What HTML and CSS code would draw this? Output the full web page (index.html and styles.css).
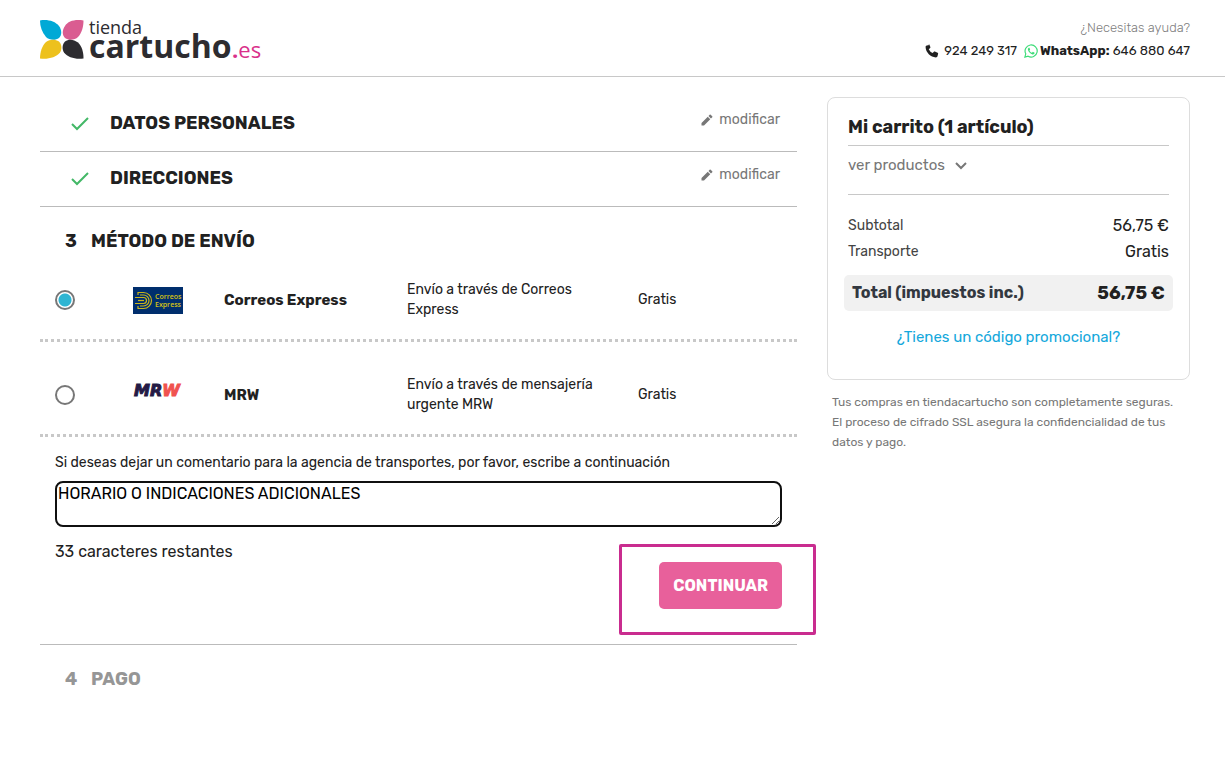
FILE: index.html
```html
<!DOCTYPE html>
<html lang="es">
<head>
<meta charset="utf-8">
<meta name="viewport" content="width=device-width, initial-scale=1">
<title>Tiendacartucho.es - Método de envío</title>
<link rel="stylesheet" href="styles.css">
</head>
<body>
<header class="site-header">
  <a class="logo" href="#" aria-label="tiendacartucho.es">
    <svg width="224" height="44" viewBox="0 0 224 44">
      <path fill="#00a9d6" d="M0 3.500C7 2 15 4 19 9c3 4 3 9 0 12-4 3-10 2-13-1C2 15.500 0 9.500 0 3.500z"/>
      <path fill="#da5c91" d="M43.500 3.500C35 2 28 4 25 9c-3 4-3 9 0 12 4 3 10 2 13-1 4-4 5.500-10.500 5.500-16.500z"/>
      <path fill="#edc11d" d="M0 41.500C0 35 2 29 6 25c4-3 9-3 13-.5 3 3 3 8 1 11-4 5-12 7-20 6z"/>
      <path fill="#2d2c30" d="M43.500 41.500c0-6.500-1.500-12-5.500-16-4-3-9-4-13-1-3 3-3 8-1 11 4 5 11 7 19.500 6z"/>
      <text class="logo-top" x="49" y="17">tienda</text>
      <text class="logo-main" x="49" y="41">cartucho</text>
      <text class="logo-es" x="192" y="41"><tspan class="logo-dot">.</tspan>es</text>
    </svg>
  </a>
  <div class="help">
    <a class="help-link" href="#">¿Necesitas ayuda?</a>
    <p class="contact">
      <svg class="phone" width="14" height="14" viewBox="0 0 24 24"><path fill="#212121" d="M7.500 1.500 3 2.600C1.800 3 1 4 1 5.200 1.300 14.500 9.500 22.700 18.800 23c1.200 0 2.200-.8 2.600-2l1.100-4.500c.1-.7-.2-1.400-.9-1.700l-4.700-2c-.6-.3-1.300-.1-1.700.4l-2 2.400a15 15 0 0 1-6.800-6.800l2.400-2c.5-.4.7-1.100.4-1.700l-2-4.700c-.3-.7-1-1-1.700-.9z"/></svg>
      <span>924 249 317</span>
      <svg class="whatsapp" width="14" height="14" viewBox="0 0 24 24" fill="none" stroke="#3ddc78" stroke-width="2"><path d="M1.500 22.500l1.500-5.700A10.400 10.400 0 1 1 7 21z"/><path fill="#3ddc78" stroke="none" d="M8.300 6.300c-1.500.8-2 2.600-1.300 4.500 1.300 3.500 4 6 7.500 7 1.900.4 3.600-.7 3.700-2.700l-3-1.700-1.500 1.700c-2-.7-3.500-2.200-4.400-4L10.500 9.700 9.400 6.500z"/></svg>
      <span><strong>WhatsApp:</strong> 646 880 647</span>
    </p>
  </div>
</header>

<main class="checkout">
  <div class="steps">
    <section class="step-done">
      <svg class="check" width="20" height="16" viewBox="0 0 20 16"><path d="M2 9l5 5L18 3"/></svg>
      <h2>DATOS PERSONALES</h2>
      <a class="edit" href="#"><svg width="12" height="12" viewBox="0 0 24 24"><path d="M1 18v5h5L18.500 10.500l-5-5zM22.500 6.600c.5-.5.5-1.300 0-1.900L19.300 1.500c-.5-.5-1.300-.5-1.900 0l-2.500 2.600 5 5z"/></svg>modificar</a>
    </section>
    <section class="step-done">
      <svg class="check" width="20" height="16" viewBox="0 0 20 16"><path d="M2 9l5 5L18 3"/></svg>
      <h2>DIRECCIONES</h2>
      <a class="edit" href="#"><svg width="12" height="12" viewBox="0 0 24 24"><path d="M1 18v5h5L18.500 10.500l-5-5zM22.500 6.600c.5-.5.5-1.300 0-1.900L19.300 1.500c-.5-.5-1.300-.5-1.900 0l-2.500 2.600 5 5z"/></svg>modificar</a>
    </section>

    <section class="shipping">
      <h2 class="step-title"><span class="num">3</span>MÉTODO DE ENVÍO</h2>
      <div class="options">
        <label class="option">
          <input type="radio" name="envio" checked>
          <svg width="50" height="27" viewBox="0 0 50 27">
            <path fill="#002e6d" d="M0 0h50v27H0z"/>
            <g fill="none" stroke="#c9b51b" stroke-width="1.200">
              <path d="M5 8V5.500h5.500a8 8 0 0 1 0 16H5V19"/>
              <path d="M7 8h3.500a5.500 5.500 0 0 1 0 11H7"/>
              <path d="M2 10.500h8.500a3 3 0 0 1 0 6H2"/>
              <path d="M5 13.500h6"/>
            </g>
            <text class="correos-text" x="22" y="12">Correos</text>
            <text class="correos-text" x="22" y="20">Express</text>
          </svg>
          <strong>Correos Express</strong>
          <span class="desc">Envío a través de Correos Express</span>
          <span>Gratis</span>
        </label>
        <label class="option">
          <input type="radio" name="envio">
          <svg width="50" height="27" viewBox="0 0 50 27">
            <text class="mrw-text" x="1" y="14">MR<tspan class="mrw-w">W</tspan></text>
          </svg>
          <strong>MRW</strong>
          <span class="desc">Envío a través de mensajería urgente MRW</span>
          <span>Gratis</span>
        </label>
      </div>
      <div class="comment">
        <label for="comentario">Si deseas dejar un comentario para la agencia de transportes, por favor, escribe a continuación</label>
        <textarea id="comentario">HORARIO O INDICACIONES ADICIONALES</textarea>
        <p>33 caracteres restantes</p>
        <div class="actions">
          <button class="continue" type="button">CONTINUAR</button>
        </div>
      </div>
    </section>

    <section class="pending">
      <h2 class="step-title"><span class="num">4</span>PAGO</h2>
    </section>
  </div>

  <aside>
    <div class="cart">
      <h2>Mi carrito (1 artículo)</h2>
      <div class="products">
        <a href="#">ver productos <svg width="12" height="8" viewBox="0 0 12 8"><path d="M1 1l5 5 5-5"/></svg></a>
      </div>
      <dl class="lines">
        <div><dt>Subtotal</dt><dd>56,75 €</dd></div>
        <div><dt>Transporte</dt><dd>Gratis</dd></div>
      </dl>
      <div class="total"><span>Total (impuestos inc.)</span><strong>56,75 €</strong></div>
      <a class="promo" href="#">¿Tienes un código promocional?</a>
    </div>
    <p class="secure">Tus compras en tiendacartucho son completamente seguras. El proceso de cifrado SSL asegura la confidencialidad de tus datos y pago.</p>
  </aside>
</main>
</body>
</html>
```
FILE: styles.css
```css
* { box-sizing: border-box; }

body {
  margin: 0;
  background: #fff;
  color: #212121;
  font: 14px/20px Rubik, Roboto, sans-serif;
}

h2, p, dl, dd { margin: 0; }
h2 { font-size: 18px; line-height: 20px; font-weight: 700; }
strong { font-weight: 700; }
a { color: #777; text-decoration: none; }

.site-header {
  display: flex;
  justify-content: space-between;
  align-items: flex-start;
  padding: 17px 35px 15px 40px;
  border-bottom: 1px solid #c8c8c8;
}
.logo svg { display: block; overflow: visible; }
.logo-top { font: 18px "Open Sans", sans-serif; fill: #2d2c30; }
.logo-main { font: 700 32px "Open Sans", sans-serif; fill: #2d2c30; }
.logo-es { font: 22px "Open Sans", sans-serif; fill: #d9308a; }
.logo-dot { font-weight: 700; }

.help { padding-top: 1px; text-align: right; font-size: 13px; }
.help-link { display: block; color: #808080; font-weight: 300; }
.contact { display: flex; align-items: center; margin-top: 3px; }
.phone { margin-right: 5px; }
.whatsapp { margin: 0 2px 0 7px; }

.checkout {
  display: grid;
  grid-template-columns: 757fr 363fr;
  gap: 30px;
  align-items: start;
  padding: 20px 35px 40px 40px;
}

.step-done {
  display: flex;
  align-items: center;
  padding: 16px 17px 18px 30px;
  border-bottom: 1px solid #bbb;
}
.check { margin-right: 20px; fill: none; stroke: #43b867; stroke-width: 2; }
.edit { display: flex; gap: 6px; align-items: center; margin: -6px 0 0 auto; }
.edit svg { fill: #777; }

.step-title { display: flex; padding: 24px 0 0 25px; }
.num { width: 26px; }

.shipping { padding-bottom: 35px; border-bottom: 1px solid #bbb; }
.options { display: grid; gap: 4px; }
.option {
  display: grid;
  grid-template-columns: 78fr 91fr 183fr 231fr 144fr;
  align-items: center;
  padding: 29px 15px 19px;
  border-bottom: 3px dotted #c8c8c8;
}
.option strong { font-size: 15px; }
.option input {
  appearance: none;
  width: 20px;
  height: 20px;
  margin: 0;
  border: 2px solid #777;
  border-radius: 50%;
}
.option input:checked { background: radial-gradient(circle, #2fb5d2 6px, #fff 7px); }
.desc { padding-right: 32px; }
.correos-text { font: 600 7px "Open Sans", sans-serif; fill: #d8c414; }
.mrw-text { font: italic 700 16px "DejaVu Sans", sans-serif; fill: #241a45; stroke: #241a45; }
.mrw-w { fill: #f0524f; stroke: #f0524f; }

.comment { padding: 16px 15px 0; }
.comment label { display: block; margin-bottom: 8px; }
.comment textarea {
  display: block;
  width: 100%;
  height: 46px;
  padding: 1px 1px 0;
  border: 2px solid #101010;
  border-radius: 8px;
  outline: 0;
  color: #000;
  font: 16px/20px Rubik, Roboto, sans-serif;
}
.comment p { margin-top: 15px; font-size: 16px; }

.actions { position: relative; width: max-content; margin-left: auto; }
.actions::after {
  content: "";
  position: absolute;
  inset: -18px -34px -26px -40px;
  border: 3px solid #c92c8f;
  border-radius: 2px;
  pointer-events: none;
}
.continue {
  display: block;
  padding: 14px 14px 13px;
  border: 0;
  border-radius: 5px;
  background: #e8609b;
  color: #fff;
  font: 700 16px/20px Rubik, Roboto, sans-serif;
}

.pending { color: #969696; }

.cart {
  padding: 19px 20px 32px;
  border: 1px solid #ddd;
  border-radius: 8px;
}
.cart h2 { padding-bottom: 8px; border-bottom: 1px solid #c8c8c8; }
.products { padding: 9px 0 19px; border-bottom: 1px solid #c8c8c8; font-size: 15px; }
.products svg { margin-left: 6px; fill: none; stroke: #777; stroke-width: 2; }
.lines { display: grid; gap: 6px; padding: 21px 0 13px; }
.lines div { display: flex; justify-content: space-between; }
.lines dt { color: #444; }
.lines dd { font-size: 16px; }
.total {
  display: flex;
  justify-content: space-between;
  margin: 0 -4px;
  padding: 8px;
  border-radius: 5px;
  background: #f1f1f1;
  color: #333840;
  font-size: 16px;
  font-weight: 700;
}
.total strong { color: #212121; font-size: 18px; }
.promo { display: block; margin-top: 16px; color: #14a8dc; text-align: center; font-size: 15px; }
.secure { padding: 12px 5px 0; color: #777; font-size: 12px; }
```
